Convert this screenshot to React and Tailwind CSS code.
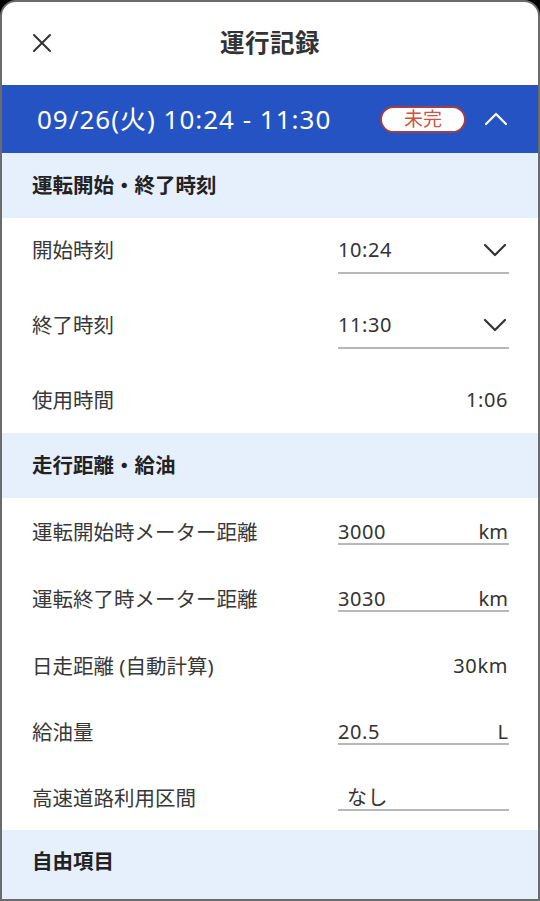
import React from "react";

const font = { fontFamily: '"Noto Sans", "Noto Sans CJK JP", sans-serif' };

const ChevronDown = () => (
  <svg width="24" height="14" viewBox="0 0 24 14" fill="none" stroke="#333" strokeWidth="2.2" strokeLinecap="round" strokeLinejoin="round">
    <path d="M2 2l10 10L22 2" />
  </svg>
);

const SectionHeader = ({ title, grow }) => (
  <div className={`bg-[#e6effc] px-[30px] flex ${grow ? "flex-1 items-start pt-[16px]" : "h-[65px] items-center"}`}>
    <span className="text-[20.5px] font-bold text-[#222]">{title}</span>
  </div>
);

// label centre sits at row top + pt + 14
const Row = ({ label, h, pt, children }) => (
  <div className={`flex items-start justify-between pl-[30px] pr-[29px] ${h} ${pt}`}>
    <span className="text-[20.5px] leading-[28px] text-[#383838]">{label}</span>
    {children}
  </div>
);

// select-style field: taller, underline 22px below text centre
const Select = ({ value }) => (
  <div className="w-[171px] border-b-2 border-[#b8b8b8] flex items-center justify-between pb-[8px]">
    <span className="text-[20px] leading-[28px] tracking-[0.6px] text-[#333]">{value}</span>
    <span className="mr-[2px]">
      <ChevronDown />
    </span>
  </div>
);

// text field: underline just below text
const Input = ({ value, unit, indent }) => (
  <div className="w-[171px] mt-[3px] border-b-2 border-[#b8b8b8] flex items-center justify-between pr-[1px]">
    <span className={`text-[20px] leading-[22px] tracking-[0.6px] text-[#333] ${indent ? "pl-[9px]" : ""}`}>{value}</span>
    {unit && <span className="text-[20px] leading-[22px] text-[#333]">{unit}</span>}
  </div>
);

const Value = ({ children }) => (
  <span className="text-[20px] leading-[28px] tracking-[0.6px] text-[#333] pr-[1px]">{children}</span>
);

export default function App() {
  return (
    <div className="bg-black w-[540px] h-[901px]" style={font}>
      <div className="w-full h-full bg-white border-2 border-[#6b6b6b] rounded-t-[16px] overflow-hidden flex flex-col">
        {/* header */}
        <div className="h-[83px] flex items-center relative">
          <button className="absolute left-[30px] top-[31px] p-0">
            <svg width="20" height="20" viewBox="0 0 20 20" stroke="#333" strokeWidth="2" strokeLinecap="round">
              <path d="M2 2l16 16M18 2L2 18" />
            </svg>
          </button>
          <h1 className="w-full text-center text-[24.5px] font-bold text-[#333] tracking-[0.5px]">運行記録</h1>
        </div>

        {/* date bar */}
        <div className="h-[68px] bg-[#2553c3] flex items-center pl-[35px] pr-[30px]">
          <span className="text-white text-[26px] tracking-[1px]">09/26(火) 10:24 - 11:30</span>
          <span className="ml-auto w-[86px] h-[27px] rounded-full bg-white border-2 border-[#a13e4a] flex items-center justify-center text-[19px] text-[#cc5440] leading-none">
            未完
          </span>
          <svg className="ml-[18px]" width="24" height="14" viewBox="0 0 24 14" fill="none" stroke="#fff" strokeWidth="2.2" strokeLinecap="round" strokeLinejoin="round">
            <path d="M2 12L12 2l10 10" />
          </svg>
        </div>

        <SectionHeader title="運転開始・終了時刻" />
        <Row label="開始時刻" h="h-[75px]" pt="pt-[18px]">
          <Select value="10:24" />
        </Row>
        <Row label="終了時刻" h="h-[75px]" pt="pt-[18px]">
          <Select value="11:30" />
        </Row>
        <Row label="使用時間" h="h-[65px]" pt="pt-[18px]">
          <Value>1:06</Value>
        </Row>

        <SectionHeader title="走行距離・給油" />
        <Row label="運転開始時メーター距離" h="h-[67px]" pt="pt-[20px]">
          <Input value="3000" unit="km" />
        </Row>
        <Row label="運転終了時メーター距離" h="h-[67px]" pt="pt-[20px]">
          <Input value="3030" unit="km" />
        </Row>
        <Row label="日走距離 (自動計算)" h="h-[66px]" pt="pt-[20px]">
          <Value>30km</Value>
        </Row>
        <Row label="給油量" h="h-[66px]" pt="pt-[20px]">
          <Input value="20.5" unit="L" />
        </Row>
        <Row label="高速道路利用区間" h="h-[66px]" pt="pt-[20px]">
          <Input value="なし" indent />
        </Row>

        <SectionHeader title="自由項目" grow />
      </div>
    </div>
  );
}
